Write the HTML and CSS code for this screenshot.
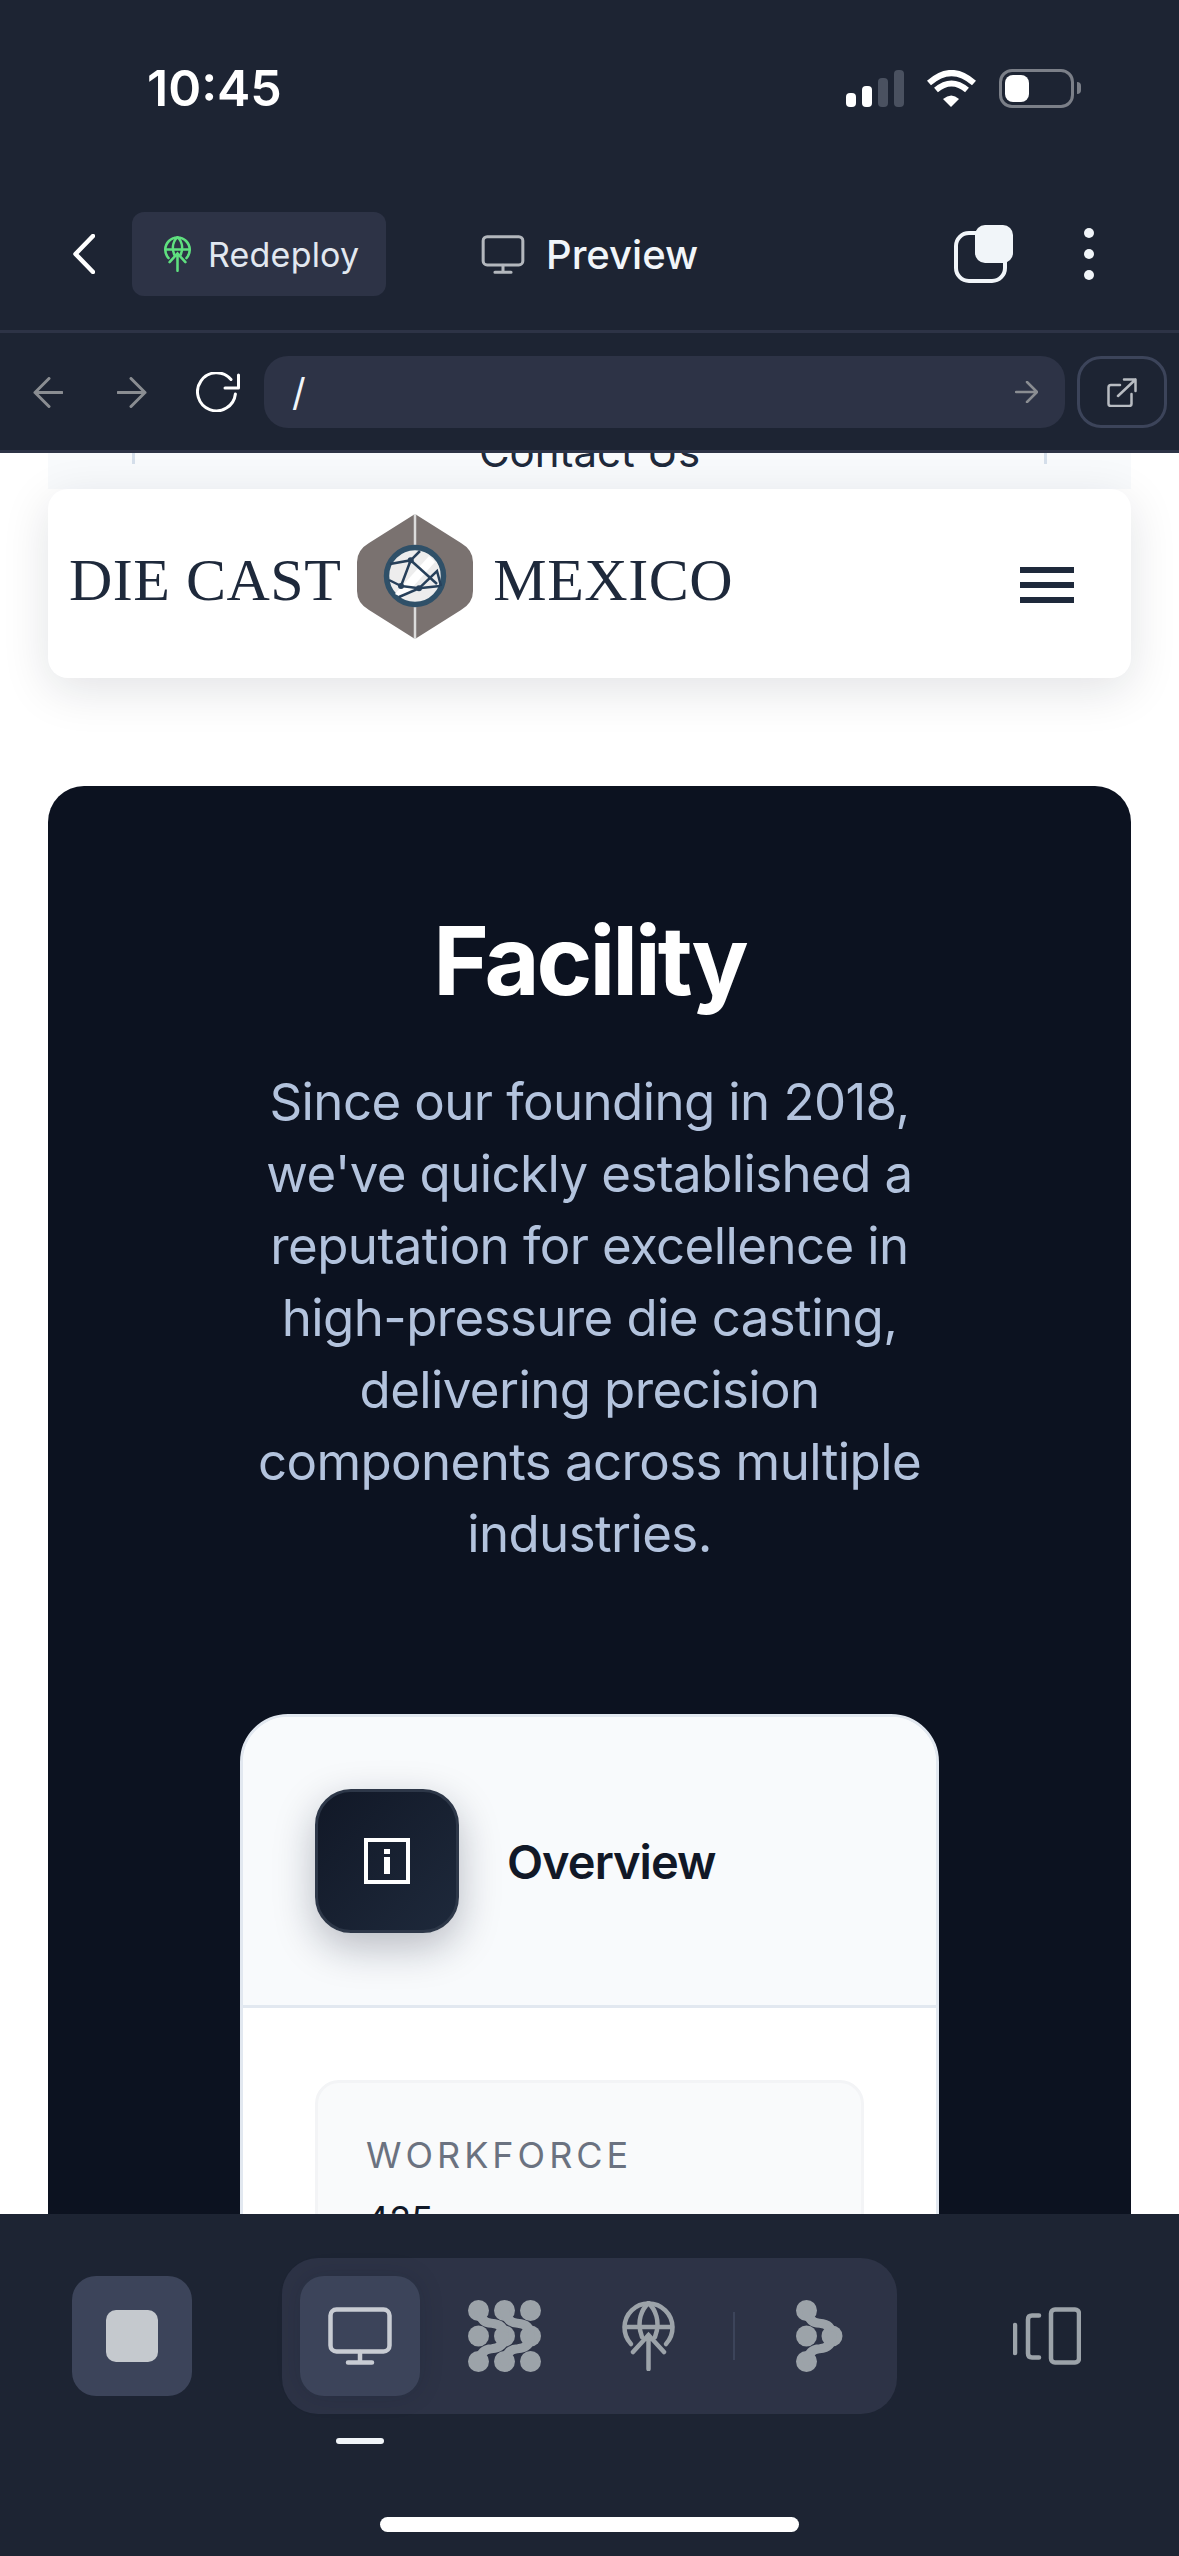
FILE: index.html
```html
<!DOCTYPE html>
<html lang="en">
<head>
  <meta charset="UTF-8">
  <meta name="viewport" content="width=device-width, initial-scale=1.0">
  <title>Facility - Die Cast Mexico</title>
  <link rel="stylesheet" href="styles.css">
</head>
<body>
  <div class="app">
    <header class="chrome">
      <div class="status">
        <span class="time">10:45</span>
        <div class="status-icons">
          <div class="signal">
            <span class="bar bar-1"></span>
            <span class="bar bar-2"></span>
            <span class="bar bar-3"></span>
            <span class="bar bar-4"></span>
          </div>
          <svg class="wifi" width="51" height="37" viewBox="0 0 51 37">
            <path d="M3 13 Q25.5 -7 48 13" fill="none" stroke="#fff" stroke-width="6"/>
            <path d="M10 20 Q25.5 7 41 20" fill="none" stroke="#fff" stroke-width="6"/>
            <path d="M17 29 Q25.5 22 33 29 L25 37 Z" fill="#fff"/>
          </svg>
          <div class="battery">
            <div class="battery-body"><span class="battery-level"></span></div>
            <span class="battery-nub"></span>
          </div>
        </div>
      </div>

      <div class="toolbar">
        <svg class="back" width="22" height="40" viewBox="0 0 22 40">
          <path d="M20 2 L2.5 20 L20 38" fill="none" stroke="#fff" stroke-width="4.5" stroke-linecap="round" stroke-linejoin="round"/>
        </svg>
        <div class="chip">
          <svg width="27" height="36" viewBox="0 0 53 70" fill="none" stroke="#5fe07f" stroke-width="5" stroke-linecap="round">
            <path d="M9 43 A24 24 0 1 1 44 43"/>
            <path d="M20 36 C14 20 20 8 26.5 2 C33 8 39 20 33 36"/>
            <path d="M3 26 H50"/>
            <path d="M26.5 68 V34 M11 51 L26.5 34 L42 51"/>
          </svg>
          <span>Redeploy</span>
        </div>
        <div class="preview">
          <svg width="44" height="39" viewBox="0 0 64 58" fill="none" stroke="#b3b7bd" stroke-width="4.5" stroke-linecap="round">
            <rect x="2.5" y="2.5" width="59" height="42" rx="6"/>
            <path d="M32 45 V55 M20 55.5 H44"/>
          </svg>
          <span>Preview</span>
        </div>
        <svg class="tabs-icon" width="59" height="58" viewBox="0 0 59 58">
          <rect x="2" y="8" width="49" height="48" rx="13" fill="none" stroke="#f1f5f9" stroke-width="4"/>
          <rect x="21" y="0" width="38" height="38" rx="10" fill="#f1f5f9"/>
        </svg>
        <div class="more">
          <span class="dot"></span>
          <span class="dot"></span>
          <span class="dot"></span>
        </div>
      </div>

      <div class="addressbar">
        <svg width="30" height="31" viewBox="0 0 30 31" fill="none" stroke="#8a8d92" stroke-width="3" stroke-linecap="round" stroke-linejoin="round">
          <path d="M29 15.5 H2 M16 1.5 L2 15.5 L16 29.5"/>
        </svg>
        <svg class="nav-forward" width="30" height="31" viewBox="0 0 30 31" fill="none" stroke="#8a8d92" stroke-width="3" stroke-linecap="round" stroke-linejoin="round">
          <path d="M1 15.5 H28 M14 1.5 L28 15.5 L14 29.5"/>
        </svg>
        <svg class="reload" width="44" height="40" viewBox="0 0 44 40" fill="none" stroke="#fff" stroke-width="3" stroke-linecap="round" stroke-linejoin="round">
          <path d="M35 7.5 A19 19 0 1 0 39.4 22"/>
          <path d="M29 16 H42.5 V3"/>
        </svg>
        <div class="url">
          <span class="url-text">/</span>
          <svg width="23" height="22" viewBox="0 0 23 22" fill="none" stroke="#8a8d92" stroke-width="2.5" stroke-linecap="round" stroke-linejoin="round">
            <path d="M1 11 H22 M12 1 L22 11 L12 21"/>
          </svg>
        </div>
        <div class="open">
          <svg width="30" height="29" viewBox="0 0 30 29" fill="none" stroke="#b8bcc2" stroke-width="2.5" stroke-linecap="round" stroke-linejoin="round">
            <path d="M13 7 H4 Q1.5 7 1.5 9.5 V26 Q1.5 28 4 28 H22 Q24.5 28 24.5 26 V16"/>
            <path d="M11 18 L28.5 1.5 M17 1.5 H28.5 V13"/>
          </svg>
        </div>
      </div>
    </header>

    <main class="viewport">
      <div class="menu-strip">
        <div class="menu-item"><span>Contact Us</span></div>
      </div>

      <nav class="site-header">
        <div class="logo">
          <span class="logo-text">DIE CAST</span>
          <svg class="logo-mark" width="116" height="125" viewBox="0 0 116 125">
            <path d="M58 0 L104 29 Q116 36 116 48 V77 Q116 89 104 96 L58 125 L12 96 Q0 89 0 77 V48 Q0 36 12 29 Z" fill="#7a7270"/>
            <path d="M58 0 V125" stroke="#dcdcdc" stroke-width="2.5"/>
            <circle cx="58" cy="62" r="28.5" fill="#ededed" stroke="#2f5068" stroke-width="5.5"/>
            <path d="M38 80 L72 42 L78 48 L46 84 Z" fill="#fff"/>
            <g fill="none" stroke="#27405a" stroke-width="2.5">
              <path d="M63 37 L53.7 46.3 L33 50"/>
              <path d="M53.7 46.3 L44 72 L62 74.3 L83 72"/>
              <path d="M53.7 46.3 L80 70"/>
              <path d="M44 72 L32 66"/>
              <path d="M62 74.3 L80 57 L84 72"/>
              <path d="M62 74.3 L42 83"/>
            </g>
            <g fill="#27405a">
              <circle cx="53.7" cy="46.3" r="3"/>
              <circle cx="44" cy="72" r="3"/>
              <circle cx="62" cy="74.3" r="3"/>
            </g>
          </svg>
          <span class="logo-text">MEXICO</span>
        </div>
        <div class="hamburger">
          <span></span>
          <span></span>
          <span></span>
        </div>
      </nav>

      <section class="facility">
        <h1>Facility</h1>
        <p class="intro">Since our founding in 2018, we've quickly established a reputation for excellence in high-pressure die casting, delivering precision components across multiple industries.</p>

        <div class="card">
          <div class="card-head">
            <div class="card-icon">
              <svg width="46" height="46" viewBox="0 0 46 46">
                <rect x="2" y="2" width="42" height="42" fill="none" stroke="#fff" stroke-width="4"/>
                <rect x="20" y="11" width="6" height="5" fill="#fff"/>
                <rect x="20" y="19" width="6" height="17" fill="#fff"/>
              </svg>
            </div>
            <h2>Overview</h2>
          </div>
          <div class="card-body">
            <div class="stat">
              <div class="stat-label">WORKFORCE</div>
              <div class="stat-value">425</div>
            </div>
          </div>
        </div>
      </section>
    </main>

    <footer class="dock">
      <div class="dock-row">
        <div class="stop"><span class="stop-square"></span></div>
        <div class="tabs">
          <div class="tab active">
            <svg width="64" height="58" viewBox="0 0 64 58" fill="none" stroke="#c8ccd3" stroke-width="4.5" stroke-linecap="round">
              <rect x="2.5" y="2.5" width="59" height="42" rx="6"/>
              <path d="M32 45 V55 M20 55.5 H44"/>
            </svg>
          </div>
          <div class="tab">
            <svg width="73" height="72" viewBox="0 0 73 72" fill="#9ca3a9" stroke="#9ca3a9" stroke-linecap="round">
              <g stroke="none">
                <circle cx="10.5" cy="10.5" r="10.5"/>
                <circle cx="36.5" cy="10.5" r="10.5"/>
                <circle cx="62.5" cy="10.5" r="10.5"/>
                <circle cx="10.5" cy="36" r="10.5"/>
                <circle cx="36.5" cy="36" r="10.5"/>
                <circle cx="62.5" cy="36" r="10.5"/>
                <circle cx="10.5" cy="61.5" r="10.5"/>
                <circle cx="36.5" cy="61.5" r="10.5"/>
                <circle cx="62.5" cy="61.5" r="10.5"/>
              </g>
              <g fill="none" stroke-width="9">
                <path d="M10.5 10.5 Q13 23 23.5 23.3 Q36.5 24 36.5 36"/>
                <path d="M36.5 10.5 Q39 23 49.5 23.3 Q62.5 24 62.5 36"/>
                <path d="M10.5 61.5 Q13 49 23.5 48.7 Q36.5 48 36.5 36"/>
                <path d="M36.5 61.5 Q39 49 49.5 48.7 Q62.5 48 62.5 36"/>
              </g>
            </svg>
          </div>
          <div class="tab">
            <svg width="53" height="70" viewBox="0 0 53 70" fill="none" stroke="#9ca3a9" stroke-width="4.5" stroke-linecap="round">
              <path d="M9 43 A24 24 0 1 1 44 43"/>
              <path d="M20 36 C14 20 20 8 26.5 2 C33 8 39 20 33 36"/>
              <path d="M3 26 H50"/>
              <path d="M26.5 68 V34 M11 51 L26.5 34 L42 51"/>
            </svg>
          </div>
          <span class="tab-divider"></span>
          <div class="tab">
            <svg width="47" height="72" viewBox="0 0 47 72" fill="#9ca3a9" stroke="#9ca3a9" stroke-linecap="round">
              <g stroke="none">
                <circle cx="10.5" cy="10.5" r="10.5"/>
                <circle cx="10.5" cy="36" r="10.5"/>
                <circle cx="10.5" cy="61.5" r="10.5"/>
                <circle cx="36" cy="36" r="10.5"/>
              </g>
              <g fill="none" stroke-width="9">
                <path d="M10.5 10.5 Q13 23 23.5 23.3 Q36 24 36 36"/>
                <path d="M10.5 61.5 Q13 49 23.5 48.7 Q36 48 36 36"/>
              </g>
            </svg>
          </div>
        </div>
        <svg class="device-icon" width="68" height="58" viewBox="0 0 68 58" fill="none" stroke="#9ca3a9" stroke-width="4.5" stroke-linecap="round">
          <path d="M2 18 V46"/>
          <path d="M26 8.5 H19 Q15 8.5 15 12.5 V46.5 Q15 50.5 19 50.5 H26"/>
          <rect x="38" y="2.5" width="28" height="53" rx="4"/>
        </svg>
      </div>
      <span class="tab-indicator"></span>
      <span class="home-bar"></span>
    </footer>
  </div>
</body>
</html>
```

FILE: styles.css
```css
* {
  box-sizing: border-box;
}
body {
  margin: 0;
  font-family: Inter, "Noto Sans", sans-serif;
  background-color: #fff;
}
svg {
  display: block;
  flex-shrink: 0;
}
.app {
  width: 1179px;
  height: 2556px;
  display: flex;
  flex-direction: column;
  overflow: hidden;
}

/* top chrome */
.chrome {
  background-color: #1d2433;
  border-bottom: 3px solid #2d3346;
  flex-shrink: 0;
}
.status {
  height: 176px;
  margin-bottom: 36px;
  padding: 0 98px 0 147px;
  display: flex;
  align-items: center;
  justify-content: space-between;
}
.time {
  color: #fff;
  font-size: 50px;
  font-weight: 600;
}
.status-icons {
  display: flex;
  align-items: center;
  gap: 22px;
}
.signal {
  display: flex;
  align-items: flex-end;
  gap: 6px;
  height: 37px;
}
.bar {
  width: 10px;
  border-radius: 4px;
  background-color: #fff;
}
.bar-1 { height: 14px; }
.bar-2 { height: 21px; }
.bar-3 { height: 29px; background-color: #4a5160; }
.bar-4 { height: 37px; background-color: #4a5160; }
.battery {
  display: flex;
  align-items: center;
  gap: 3px;
}
.battery-body {
  width: 75px;
  height: 39px;
  padding: 3px;
  border: 3px solid #7b7f88;
  border-radius: 13px;
}
.battery-level {
  display: block;
  width: 24px;
  height: 27px;
  border-radius: 8px;
  background-color: #fff;
}
.battery-nub {
  width: 4px;
  height: 12px;
  border-radius: 0 6px 6px 0;
  background-color: #7b7f88;
}

.toolbar {
  height: 121px;
  padding: 0 85px 34px 73px;
  display: flex;
  align-items: center;
  border-bottom: 3px solid #2d3346;
}
.chip {
  width: 254px;
  height: 84px;
  margin-left: 37px;
  padding-left: 32px;
  display: flex;
  align-items: center;
  gap: 17px;
  border-radius: 12px;
  background-color: #2d3346;
  color: #e2e8f0;
  font-size: 34px;
  letter-spacing: 0.2px;
}
.preview {
  margin-left: 95px;
  display: flex;
  align-items: center;
  gap: 21px;
  color: #f1f5f9;
  font-size: 40px;
  font-weight: 500;
}
.tabs-icon {
  margin-left: auto;
}
.more {
  margin-left: 71px;
  display: flex;
  flex-direction: column;
  gap: 11px;
}
.dot {
  width: 10px;
  height: 10px;
  border-radius: 50%;
  background-color: #f1f5f9;
}

.addressbar {
  height: 117px;
  padding: 23px 12px 22px 33px;
  display: flex;
  align-items: center;
}
.nav-forward {
  margin-left: 54px;
}
.reload {
  margin-left: 49px;
}
.url {
  flex: 1;
  height: 72px;
  margin-left: 24px;
  padding: 0 27px 0 28px;
  display: flex;
  align-items: center;
  justify-content: space-between;
  border-radius: 24px;
  background-color: #2d3346;
}
.url-text {
  color: #f1f5f9;
  font-size: 38px;
}
.open {
  width: 90px;
  height: 72px;
  margin-left: 12px;
  display: flex;
  align-items: center;
  justify-content: center;
  border: 3px solid #3c445a;
  border-radius: 24px;
}

/* page */
.viewport {
  flex: 1;
  min-height: 0;
  overflow: hidden;
  background-color: #fff;
}
.menu-strip {
  height: 36px;
  margin: 0 48px;
  padding: 0 84px;
  background-color: #f8fafc;
  overflow: hidden;
}
.menu-item {
  height: 36px;
  border-left: 3px solid #d5dfeb;
  border-right: 3px solid #d5dfeb;
  text-align: center;
  color: #1e293b;
  font-size: 42px;
  line-height: 48px;
}
.menu-item span {
  display: block;
  margin-top: -25px;
}
.site-header {
  height: 189px;
  margin: 0 48px;
  padding: 0 57px 0 21px;
  display: flex;
  align-items: center;
  justify-content: space-between;
  border-radius: 20px;
  background-color: #fff;
  box-shadow: 0 12px 48px rgba(15, 23, 42, 0.12);
}
.logo {
  display: flex;
  align-items: center;
  margin-bottom: 14px;
}
.logo-text {
  padding-top: 8px;
  color: #1e293b;
  font-family: "Liberation Serif", serif;
  font-size: 60px;
  letter-spacing: 0.5px;
}
.logo-mark {
  margin: 0 20px 0 16px;
}
.hamburger {
  margin-top: 2px;
  display: flex;
  flex-direction: column;
  gap: 9px;
}
.hamburger span {
  width: 54px;
  height: 6px;
  background-color: #1e293b;
}

.facility {
  margin: 108px 48px 0;
  padding: 117px 192px 0;
  border-radius: 36px;
  background-color: #0c1220;
  text-align: center;
}
.facility h1 {
  margin: 0;
  color: #fff;
  font-size: 95px;
  font-weight: 700;
  line-height: 115px;
  letter-spacing: -3px;
}
.intro {
  margin: 48px 0 0;
  color: #b3c3dd;
  font-size: 51px;
  line-height: 72px;
  letter-spacing: -0.6px;
}
.card {
  margin-top: 144px;
  border: 3px solid #e2e8f0;
  border-radius: 48px;
  background-color: #fff;
  overflow: hidden;
  text-align: left;
}
.card-head {
  padding: 72px;
  display: flex;
  align-items: center;
  gap: 48px;
  border-bottom: 3px solid #e2e8f0;
  background-color: #f8fafc;
}
.card-icon {
  width: 144px;
  height: 144px;
  display: flex;
  align-items: center;
  justify-content: center;
  border: 3px solid #2d3748;
  border-radius: 36px;
  background: linear-gradient(135deg, #111827, #1e293b);
  box-shadow: 0 14px 40px rgba(15, 23, 42, 0.28);
}
.card-head h2 {
  margin: 0;
  color: #111827;
  font-size: 47px;
  font-weight: 600;
  letter-spacing: -1px;
}
.card-body {
  padding: 72px;
}
.stat {
  padding: 50px 48px;
  border: 3px solid #f3f4f6;
  border-radius: 24px;
  background-color: #f9fafb;
}
.stat-label {
  color: #6b7280;
  font-size: 36px;
  letter-spacing: 4px;
}
.stat-value {
  margin-top: 20px;
  color: #111827;
  font-size: 36px;
}

/* bottom dock */
.dock {
  height: 342px;
  flex-shrink: 0;
  padding-top: 44px;
  display: flex;
  flex-direction: column;
  background-color: #1d2433;
}
.dock-row {
  padding: 0 98px 0 72px;
  display: flex;
  align-items: center;
  justify-content: space-between;
}
.stop {
  width: 120px;
  height: 120px;
  display: flex;
  align-items: center;
  justify-content: center;
  border-radius: 24px;
  background-color: #3c445a;
}
.stop-square {
  width: 52px;
  height: 52px;
  border-radius: 10px;
  background-color: #c5c9ce;
}
.tabs {
  width: 615px;
  height: 156px;
  margin-left: 90px;
  margin-right: auto;
  padding: 18px;
  display: flex;
  align-items: center;
  gap: 24px;
  border-radius: 36px;
  background-color: #2d3346;
}
.tab {
  width: 120px;
  height: 120px;
  display: flex;
  align-items: center;
  justify-content: center;
  border-radius: 24px;
}
.tab.active {
  background-color: #3c445a;
  box-shadow: 0 0 24px rgba(15, 23, 42, 0.15);
}
.tab-divider {
  width: 2px;
  height: 48px;
  margin-left: 1px;
  background-color: #3c445a;
}
.tab-indicator {
  width: 48px;
  height: 6px;
  margin: 24px 0 0 336px;
  border-radius: 3px;
  background-color: #f1f5f9;
}
.home-bar {
  width: 419px;
  height: 15px;
  margin: 73px auto 0;
  border-radius: 8px;
  background-color: #fff;
}
```
